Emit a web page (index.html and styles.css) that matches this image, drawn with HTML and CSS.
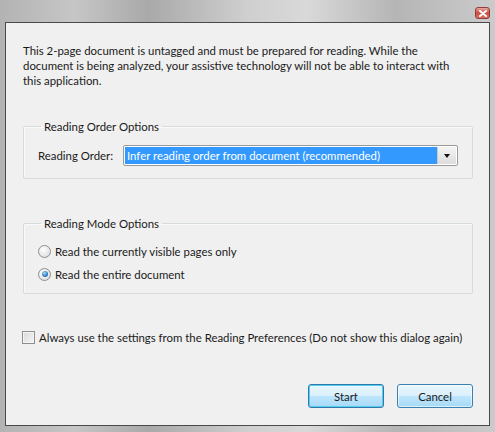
FILE: index.html
```html
<!DOCTYPE html>
<html lang="en">
<head>
    <meta charset="UTF-8">
    <title>Reading Untagged Document</title>
    <link rel="stylesheet" href="styles.css">
</head>
<body>

<div class="window">
    <div class="titlebar">
        <span class="close-btn">
            <svg width="8" height="7" viewBox="0 0 8 7">
                <path d="M1 1 L7 6 M7 1 L1 6" stroke="#fff" stroke-width="2" stroke-linecap="round"/>
            </svg>
        </span>
    </div>

    <div class="panel">
        <p class="intro">
            This 2-page document is untagged and must be prepared for reading. While the<br>
            document is being analyzed, your assistive technology will not be able to interact with<br>
            this application.
        </p>

        <fieldset class="group order-group">
            <legend>Reading Order Options</legend>
            <div class="order-row">
                <label class="order-label">Reading Order:</label>
                <div class="combo">
                    <span class="combo-value">Infer reading order from document (recommended)</span>
                    <span class="combo-arrow"></span>
                </div>
            </div>
        </fieldset>

        <fieldset class="group mode-group">
            <legend>Reading Mode Options</legend>
            <label class="option">
                <span class="radio"></span>
                Read the currently visible pages only
            </label>
            <label class="option">
                <span class="radio checked"></span>
                Read the entire document
            </label>
        </fieldset>

        <label class="option always">
            <span class="checkbox"></span>
            Always use the settings from the Reading Preferences (Do not show this dialog again)
        </label>

        <div class="buttons">
            <button type="button" class="btn default">Start</button>
            <button type="button" class="btn">Cancel</button>
        </div>
    </div>
</div>

</body>
</html>
```

FILE: styles.css
```css
body {
    margin: 0;
    font-family: Lato, "Open Sans", sans-serif;
    font-size: 11.4px;
    color: #1a1a1a;
}

.window {
    width: 495px;
    height: 432px;
    box-sizing: border-box;
    padding: 0 5px 6px 5px;
    display: flex;
    flex-direction: column;
    background: linear-gradient(90deg, #b3b3b3 0%, #c6c6c6 15%, #a9a9a9 30%, #cfcfcf 50%, #d9d9d9 62%, #b5b5b5 80%, #cbcbcb 100%);
}

.titlebar {
    height: 22px;
    display: flex;
    justify-content: flex-end;
}

.close-btn {
    width: 15px;
    height: 12px;
    margin-top: 7px;
    box-sizing: border-box;
    border: 1px solid #8d3b3b;
    border-radius: 3px;
    background: linear-gradient(#e9a89e, #cc4a3d 50%, #db7261);
    display: flex;
    align-items: center;
    justify-content: center;
}

.panel {
    flex: 1;
    background-color: #f0f0f0;
    border: 1px solid #4a4a4a;
    padding: 20px 16px 17px 17px;
    display: flex;
    flex-direction: column;
}

.intro {
    margin: 0;
    line-height: 15px;
}

.group {
    margin: 0;
    border: 1px solid #d6dbde;
    border-radius: 2px;
    box-shadow: inset 1px 1px 0 #fafafa;
    padding: 11px 14px 12px 14px;
    min-width: 0;
}

.group legend {
    padding: 0 3px;
    margin-left: 3px;
    line-height: 15px;
}

.order-group {
    margin-top: 31px;
}

.mode-group {
    margin-top: 37px;
    padding-top: 12px;
    padding-bottom: 11px;
    display: flex;
    flex-direction: column;
    gap: 7px;
}

.order-row {
    display: flex;
    align-items: center;
}

.order-label {
    width: 85px;
}

.combo {
    flex: 1;
    height: 21px;
    box-sizing: border-box;
    border: 1px solid #9a9a9a;
    border-radius: 2px;
    background: #fff;
    padding: 1px;
    display: flex;
}

.combo-value {
    flex: 1;
    background-color: #3399ff;
    color: #fff;
    padding-left: 2px;
    line-height: 17px;
}

.combo-arrow {
    width: 18px;
    background: linear-gradient(#f4f4f4, #dcdcdc);
    border-left: 1px solid #c8c8c8;
    display: flex;
    align-items: center;
    justify-content: center;
}

.combo-arrow::after {
    content: "";
    border-left: 3px solid transparent;
    border-right: 3px solid transparent;
    border-top: 4px solid #111;
}

.option {
    display: flex;
    align-items: center;
    gap: 4px;
    height: 16px;
}

.radio {
    width: 13px;
    height: 13px;
    box-sizing: border-box;
    border-radius: 50%;
    border: 1px solid #8e8f8f;
    background: radial-gradient(circle at 40% 35%, #ffffff, #e6e6e6 60%, #cfcfcf);
    display: flex;
    align-items: center;
    justify-content: center;
}

.radio.checked::after {
    content: "";
    width: 6px;
    height: 6px;
    border-radius: 50%;
    background: radial-gradient(circle at 40% 35%, #a8dcf7, #2f7bbf 60%, #0e4f83);
}

.always {
    margin-top: 35px;
    margin-left: -1px;
    white-space: nowrap;
}

.checkbox {
    width: 13px;
    height: 13px;
    box-sizing: border-box;
    border: 1px solid #8e8f8f;
    background: linear-gradient(135deg, #d8d8d8, #f6f6f6);
    box-shadow: inset 0 0 0 1px #f4f4f4;
}

.buttons {
    margin-top: auto;
    display: flex;
    justify-content: flex-end;
    gap: 13px;
}

.btn {
    width: 76px;
    height: 24px;
    font-family: inherit;
    font-size: 11.4px;
    color: #1a1a1a;
    border: 1px solid #3c7fb1;
    border-radius: 3px;
    background: linear-gradient(#eaf6fd 0%, #d9f0fc 50%, #bee6fd 51%, #a7d9f5 100%);
    box-shadow: inset 0 0 0 1px rgba(255, 255, 255, 0.6);
    padding: 0;
}

.btn.default {
    border-color: #2f79a8;
    box-shadow: inset 0 0 0 1px #56cdf3;
}
```
